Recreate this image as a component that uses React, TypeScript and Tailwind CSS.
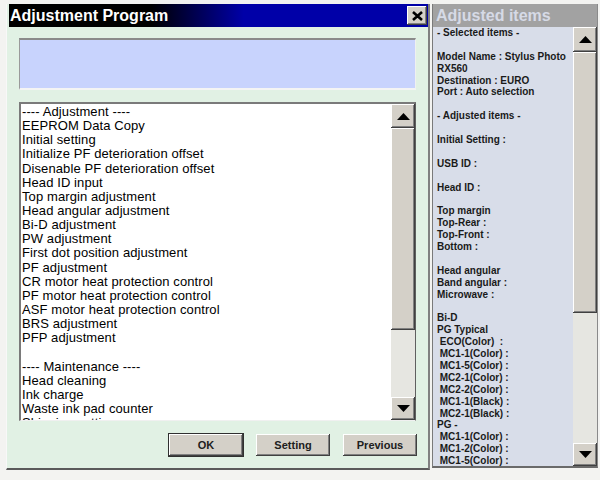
import React from 'react';

const adjustment = [
  '---- Adjustment ----',
  'EEPROM Data Copy',
  'Initial setting',
  'Initialize PF deterioration offset',
  'Disenable PF deterioration offset',
  'Head ID input',
  'Top margin adjustment',
  'Head angular adjustment',
  'Bi-D adjustment',
  'PW adjustment',
  'First dot position adjustment',
  'PF adjustment',
  'CR motor heat protection control',
  'PF motor heat protection control',
  'ASF motor heat protection control',
  'BRS adjustment',
  'PFP adjustment',
  '',
  '---- Maintenance ----',
  'Head cleaning',
  'Ink charge',
  'Waste ink pad counter',
  'Shipping setting',
];

const adjusted = [
  '- Selected items -',
  '',
  'Model Name : Stylus Photo',
  'RX560',
  'Destination : EURO',
  'Port : Auto selection',
  '',
  '- Adjusted items -',
  '',
  'Initial Setting :',
  '',
  'USB ID :',
  '',
  'Head ID :',
  '',
  'Top margin',
  'Top-Rear :',
  'Top-Front :',
  'Bottom :',
  '',
  'Head angular',
  'Band angular :',
  'Microwave :',
  '',
  'Bi-D',
  'PG Typical',
  ' ECO(Color)  :',
  ' MC1-1(Color) :',
  ' MC1-5(Color) :',
  ' MC2-1(Color) :',
  ' MC2-2(Color) :',
  ' MC1-1(Black) :',
  ' MC2-1(Black) :',
  'PG -',
  ' MC1-1(Color) :',
  ' MC1-2(Color) :',
  ' MC1-5(Color) :',
];

const raised = 'bg-[#d4d0c8] shadow-[inset_-1px_-1px_0_#404040,inset_1px_1px_0_#ffffff,inset_-2px_-2px_0_#808080]';

const Arrow = ({ up }: { up?: boolean }) => (
  <svg width="13" height="7" viewBox="0 0 13 7">
    <polygon points={up ? '6.5,0 13,7 0,7' : '0,0 13,0 6.5,7'} fill="#000" />
  </svg>
);

const Btn = ({ label, def }: { label: string; def?: boolean }) => (
  <button
    className={`w-[74px] h-[22px] text-[11px] font-bold text-[#202020] ${raised} ${def ? 'outline outline-1 outline-[#303030]' : ''}`}
  >
    {label}
  </button>
);

export default function App() {
  return (
    <div className="w-[600px] h-[480px] bg-[#f3f3f1] flex pt-[4px] pl-[6px] gap-[2px] font-['Liberation_Sans',Arial,sans-serif]">
      {/* main window */}
      <div className="w-[424px] h-[466px] bg-[#e1f1e4] flex flex-col border-l border-l-[#f8f8f8] border-r-2 border-r-[#808080] border-b-2 border-b-[#5a5a5a]">
        <div className="h-[23px] ml-[2px] flex items-center justify-between pl-[1px] pr-[1px] bg-[linear-gradient(90deg,#000000_34%,#0000a8_56%)]">
          <span className="text-white font-bold text-[16px] leading-none">Adjustment Program</span>
          <div className={`w-[20px] h-[19px] flex items-center justify-center ${raised}`}>
            <svg width="11" height="10" viewBox="0 0 11 10">
              <path d="M1 1 L10 9 M10 1 L1 9" stroke="#000" strokeWidth="2.6" />
            </svg>
          </div>
        </div>

        <div className="flex flex-col px-[12px] pt-[11px]">
          <div className="h-[52px] bg-[#c8d3fd] border-t-2 border-t-[#8a8a8a] border-l border-l-[#9a9a9a] border-r border-r-[#f0f0f0] border-b-2 border-b-[#f4f4f4]" />

          <div className="mt-[12px] h-[319px] bg-white flex border-t-2 border-l-2 border-[#7a7a7a] border-r border-r-[#606060] border-b border-b-[#f0f0f0]">
            <div className="flex-1 overflow-hidden pl-[1px] pt-[1px] text-[13px] tracking-[0.1px] leading-[14.15px] text-black">
              {adjustment.map((t, i) => (
                <div key={i} className="h-[14.15px] whitespace-pre">{t}</div>
              ))}
            </div>
            <div className="w-[24px] flex flex-col">
              <div className={`h-[24px] flex items-center justify-center ${raised}`}><Arrow up /></div>
              <div className={`h-[202px] ${raised}`} />
              <div className="flex-1 bg-[#e6e6e1]" />
              <div className={`h-[23px] flex items-center justify-center ${raised}`}><Arrow /></div>
            </div>
          </div>

          <div className="mt-[13px] flex justify-end gap-[13px] mr-[-1px]">
            <Btn label="OK" def />
            <Btn label="Setting" />
            <Btn label="Previous" />
          </div>
        </div>
      </div>

      {/* adjusted items panel */}
      <div className="w-[166px] h-[464px] flex flex-col border-l border-l-[#7a7a7a] border-b-2 border-b-[#6a6a6a] border-r border-r-[#8a8a8a]">
        <div className="h-[23px] bg-[#a2a2a2] flex items-center pl-[3px]">
          <span className="text-[#d6dae6] font-bold text-[16px] leading-none">Adjusted items</span>
        </div>
        <div className="flex-1 flex bg-[#d8dde9] overflow-hidden">
          <div className="flex-1 overflow-hidden pl-[4px] text-[10px] font-bold leading-[11.9px] text-[#1a1a1a]">
            {adjusted.map((t, i) => (
              <div key={i} className="h-[11.9px] whitespace-pre">{t}</div>
            ))}
          </div>
          <div className="w-[24px] flex flex-col">
            <div className={`h-[25px] flex items-center justify-center ${raised}`}><Arrow up /></div>
            <div className={`h-[261px] ${raised}`} />
            <div className="flex-1 bg-[#e6e6e1]" />
            <div className={`h-[23px] flex items-center justify-center ${raised}`}><Arrow /></div>
          </div>
        </div>
      </div>
    </div>
  );
}
